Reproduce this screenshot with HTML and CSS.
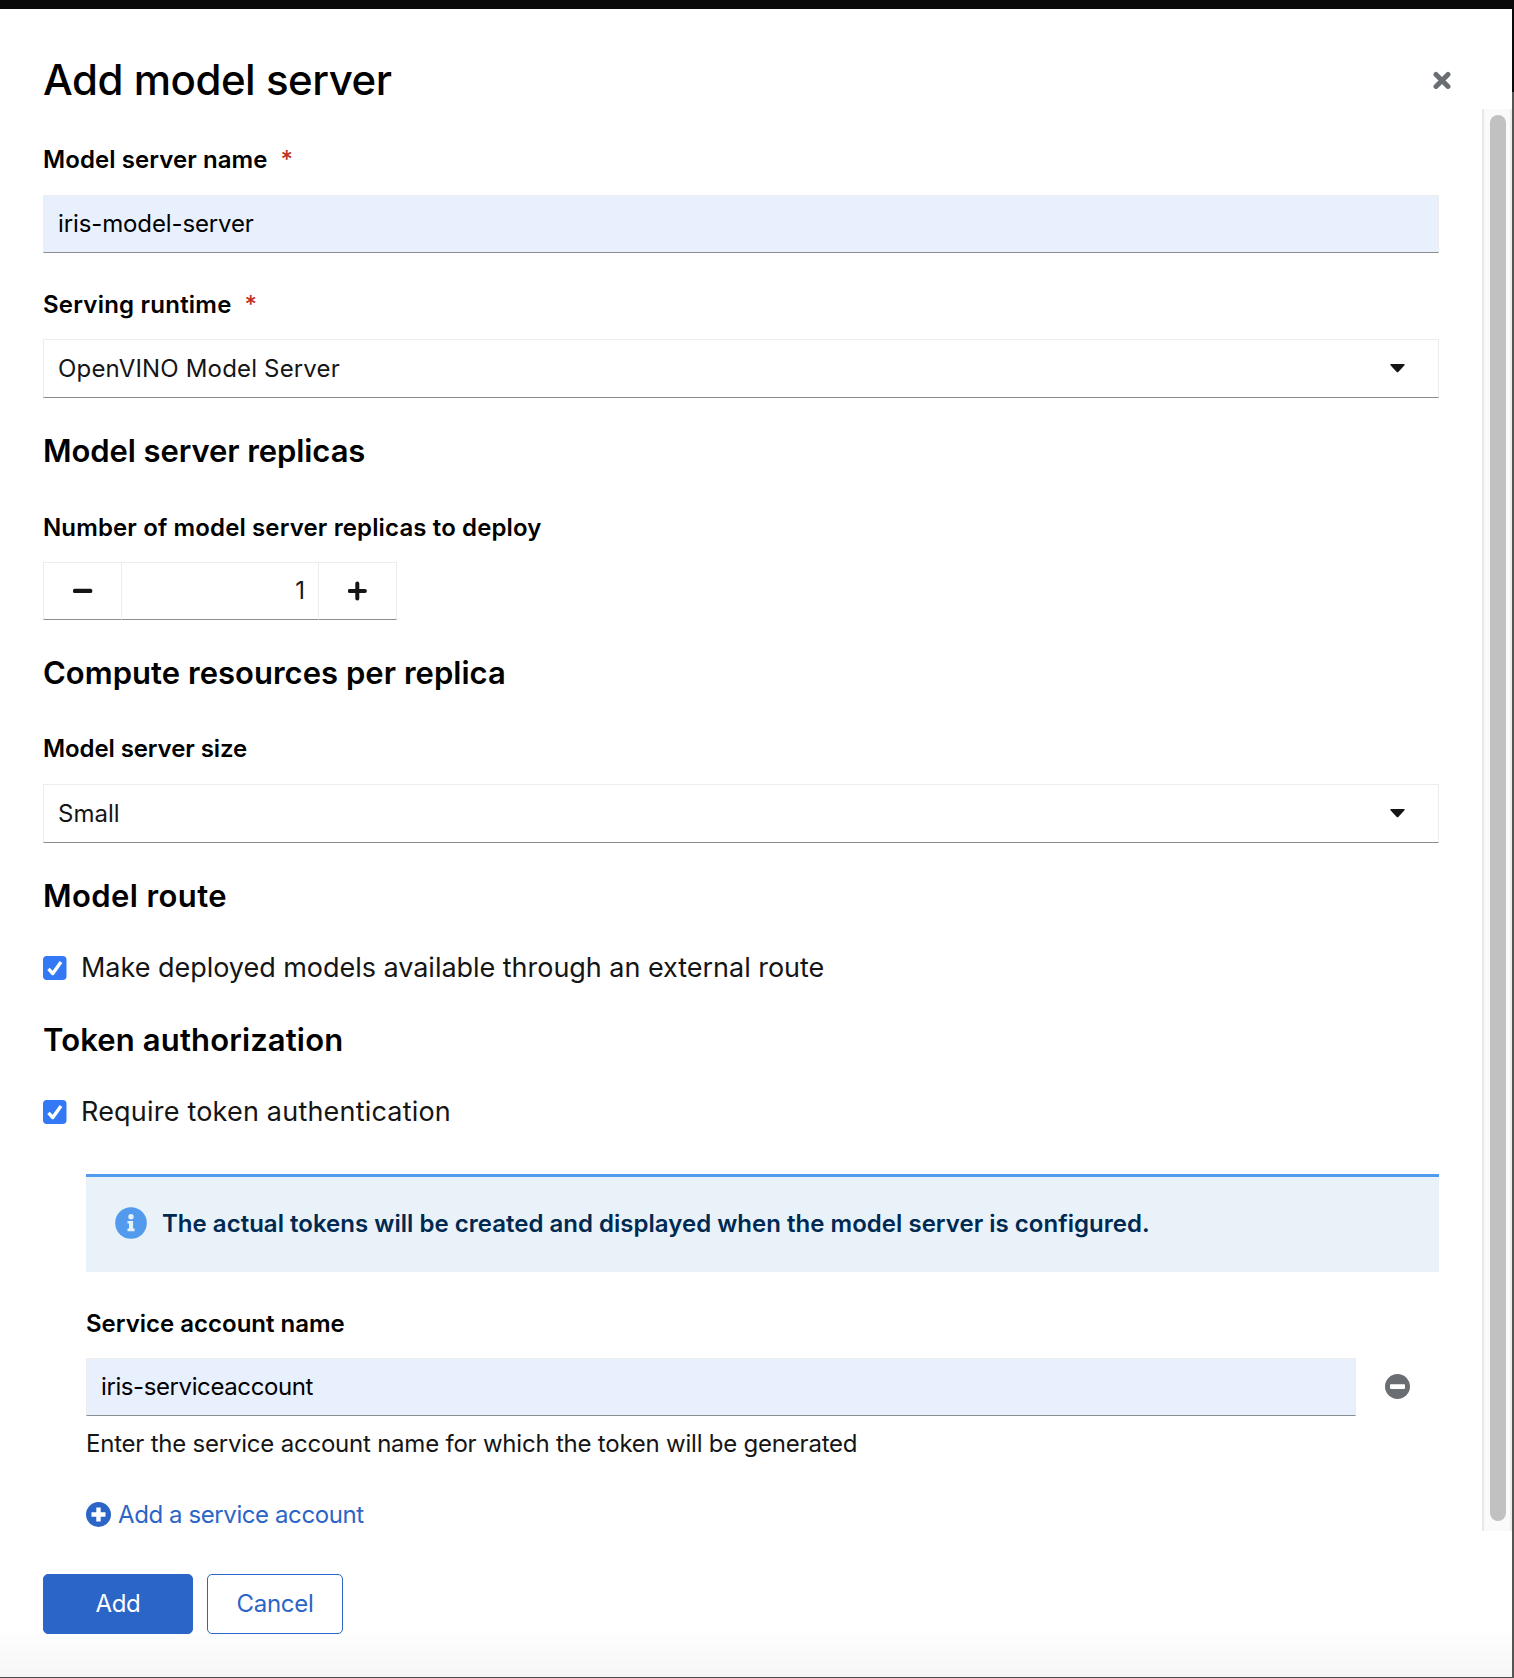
FILE: index.html
```html
<!DOCTYPE html>
<html lang="en">
<head>
<meta charset="utf-8">
<title>Add model server</title>
<link rel="stylesheet" href="styles.css">
</head>
<body>
<div class="page">
  <main class="modal">
    <header class="modal-header">
      <h1 class="title">Add model server</h1>
      <button class="close" aria-label="Close">
        <svg width="18" height="18" viewBox="0 0 18 18"><path d="M3 3.4 L15 15.4 M15 3.4 L3 15.4" stroke="#6a6e73" stroke-width="5" stroke-linecap="round"/></svg>
      </button>
    </header>

    <div class="modal-scroll">
      <form class="modal-body">
        <label class="label name-label">Model server name<span class="required">*</span></label>
        <div class="field filled"><span class="t-server">iris-model-server</span></div>

        <label class="label runtime-label">Serving runtime<span class="required">*</span></label>
        <div class="field select"><span class="t-runtime">OpenVINO Model Server</span>
          <svg class="caret" width="15" height="9" viewBox="0 0 15 9"><path d="M1 0H14Q15.2 .4 14.3 1.5L8.5 7.8Q7.5 8.8 6.5 7.8L.7 1.5Q-.2 .4 1 0Z" fill="#151515"/></svg>
        </div>

        <h2 class="section t-replicas">Model server replicas</h2>
        <label class="label section-label t-number">Number of model server replicas to deploy</label>
        <div class="stepper">
          <span class="step"><svg width="20" height="20" viewBox="0 0 20 20"><rect x="0" y="7.7" width="19.2" height="4.3" rx="1.5" fill="#151515"/></svg></span>
          <span class="step-value">1</span>
          <span class="step"><svg width="20" height="20" viewBox="0 0 20 20"><path d="M1.7 10H16.9M9.3 2.4V17.6" stroke="#151515" stroke-width="4" stroke-linecap="round"/></svg></span>
        </div>

        <h2 class="section t-compute">Compute resources per replica</h2>
        <label class="label size-label">Model server size</label>
        <div class="field select"><span class="t-small">Small</span>
          <svg class="caret" width="15" height="9" viewBox="0 0 15 9"><path d="M1 0H14Q15.2 .4 14.3 1.5L8.5 7.8Q7.5 8.8 6.5 7.8L.7 1.5Q-.2 .4 1 0Z" fill="#151515"/></svg>
        </div>

        <h2 class="section t-route">Model route</h2>
        <div class="check">
          <svg class="box" width="24" height="24" viewBox="0 0 24 24"><rect width="23.5" height="24" rx="4" fill="#3478f6"/><path d="M5.5 12.8 L9.8 17.5 L18 6" fill="none" stroke="#fff" stroke-width="3.4" stroke-linejoin="round"/></svg>
          <span class="t-make">Make deployed models available through an external route</span>
        </div>

        <h2 class="section t-token">Token authorization</h2>
        <div class="check">
          <svg class="box" width="24" height="24" viewBox="0 0 24 24"><rect width="23.5" height="24" rx="4" fill="#3478f6"/><path d="M5.5 12.8 L9.8 17.5 L18 6" fill="none" stroke="#fff" stroke-width="3.4" stroke-linejoin="round"/></svg>
          <span class="t-require">Require token authentication</span>
        </div>

        <div class="nested">
          <div class="alert">
            <svg width="32" height="32" viewBox="0 0 32 32"><circle cx="16" cy="16" r="15.8" fill="#519aed"/><circle cx="16" cy="9.8" r="2.7" fill="#e7f1fa"/><path d="M12.5 14H18.1V21.6H19.6V24.2H12.5V21.6H14V16.6H12.5Z" fill="#e7f1fa"/></svg>
            <strong class="t-alert">The actual tokens will be created and displayed when the model server is configured.</strong>
          </div>
          <label class="label account-label">Service account name</label>
          <div class="account-row">
            <div class="field filled account-field"><span class="t-account">iris-serviceaccount</span></div>
            <svg class="remove" width="25" height="25" viewBox="0 0 25 25"><circle cx="12.5" cy="12.5" r="12.5" fill="#6a6e73"/><rect x="5" y="10.3" width="15" height="4.6" rx=".8" fill="#fff"/></svg>
          </div>
          <p class="helper">Enter the service account name for which the token will be generated</p>
          <a class="add-link">
            <svg width="25" height="25" viewBox="0 0 25 25"><circle cx="12.5" cy="12.5" r="12.5" fill="#2b65c7"/><path d="M5.5 12.5H19.5M12.5 5.5V19.5" stroke="#fff" stroke-width="4.4"/></svg>
            <span>Add a service account</span>
          </a>
        </div>
      </form>
      <div class="track"><div class="thumb"></div></div>
    </div>

    <footer class="modal-footer">
      <button class="btn primary">Add</button>
      <button class="btn secondary">Cancel</button>
    </footer>
  </main>
  <div class="backdrop"></div>
</div>
</body>
</html>
```
FILE: styles.css
```css
* { box-sizing: border-box; }

body {
  margin: 0;
  background: #fff;
  color: #151515;
  font: 400 24px/36px Inter, "Liberation Sans", sans-serif;
}

h1, h2, p { margin: 0; }
svg { display: block; flex: none; }
button { font: inherit; cursor: pointer; }

.page {
  display: grid;
  grid-template-columns: 1fr 2px;
  height: 1678px;
  border-top: 9px solid #0a0a0a;
}

.backdrop { background: linear-gradient(#0a0a0a 83px, #555552 83px); }

.modal {
  display: grid;
  grid-template-rows: 100px 1422px 1fr;
  min-width: 0;
  border-bottom: 1px solid #4d4d4d;
  background: #fff linear-gradient(#fff, #f6f6f6) no-repeat bottom / 100% 50px;
}

.modal-header {
  display: flex;
  justify-content: space-between;
  align-items: flex-start;
  padding: 43px 61px 0 43px;
}

.title {
  font-size: 42px;
  font-weight: 500;
  line-height: 56px;
  letter-spacing: -0.47px;
  color: #000;
}

.close {
  margin-top: 19px;
  padding: 0;
  border: 0;
  background: none;
}

.modal-scroll {
  display: grid;
  grid-template-columns: 1fr 30px;
  grid-template-rows: 1422px;
}

.modal-body {
  min-width: 0;
  padding: 33px 43px 0;
}

.track {
  padding: 6px 4px 10px 6px;
  border-left: 2px solid #e8e8e8;
  border-right: 2px solid #ededed;
  background: #fafafa;
}

.thumb {
  width: 16px;
  height: 100%;
  border-radius: 8px;
  background: #c1c1c1;
}

.label {
  display: block;
  height: 36px;
  font-weight: 600;
  color: #000;
}

.name-label { margin: 0 0 17px; letter-spacing: 0.08px; }
.runtime-label { margin: 34px 0 16px; letter-spacing: 0.22px; }
.section-label { margin: 39px 0 16px; }
.size-label { margin: 38px 0 17px; letter-spacing: -0.1px; }
.account-label { margin: 34px 0 16px; letter-spacing: 0; }

.required {
  margin-left: 13px;
  font-size: 24px;
  font-weight: 500;
  line-height: 1;
  letter-spacing: 0;
  color: #c0311f;
}

.field {
  display: flex;
  align-items: center;
  justify-content: space-between;
  height: 59px;
  padding: 0 33px 0 14px;
  border: 1px solid #ededed;
  border-bottom-color: #8a8d90;
}

.filled {
  height: 58px;
  background: #e8effd;
  color: #000;
}

.section {
  margin-top: 33px;
  font-size: 31px;
  font-weight: 600;
  line-height: 40px;
  color: #000;
}

.stepper {
  display: grid;
  grid-template-columns: 79px 196px 79px;
  width: 354px;
  height: 58px;
}

.step, .step-value {
  display: flex;
  align-items: center;
  justify-content: center;
  border: 1px solid #ededed;
  border-bottom-color: #8a8d90;
}

.step-value {
  justify-content: flex-end;
  padding-right: 13px;
  border-width: 1px 0;
}

.check {
  display: flex;
  align-items: center;
  gap: 14px;
  margin: 32px 0 -1px;
  font-size: 27px;
  line-height: 40px;
}

.box { margin-bottom: 1px; }

.nested { padding: 43px 0 0 43px; }

.alert {
  display: flex;
  align-items: flex-start;
  gap: 15px;
  height: 98px;
  padding: 30px 29px 0;
  border-top: 3px solid #519aed;
  background: #e9f1f9;
  color: #002952;
}

.alert strong { font-weight: 600; margin-top: -1px; white-space: nowrap; }

.account-row {
  display: flex;
  align-items: center;
  gap: 29px;
}

.account-field { width: 1270px; }
.remove { margin-bottom: 1px; }

.helper {
  margin-top: 10px;
  letter-spacing: -0.22px;
}

.add-link {
  display: flex;
  align-items: center;
  gap: 7px;
  margin-top: 34px;
  color: #2b65c7;
  letter-spacing: -0.41px;
}

.add-link svg { margin-bottom: 1px; }
.add-link span { padding-top: 1px; }

.modal-footer {
  display: flex;
  gap: 14px;
  padding: 43px 43px 0;
}

.btn {
  height: 60px;
  padding: 0;
  border: 1px solid #2b65c7;
  border-radius: 5px;
  letter-spacing: -0.3px;
}

.primary { width: 150px; background: #2b65c7; color: #fff; }
.secondary { width: 136px; background: #fff; color: #2b65c7; }

/* Tracking for individual strings */
.t-server { letter-spacing: -0.12px; }
.t-runtime { letter-spacing: 0.17px; }
.t-replicas { letter-spacing: -0.08px; }
.t-number { letter-spacing: 0.13px; }
.t-compute { letter-spacing: 0.03px; }
.t-small { letter-spacing: 0; }
.t-route { letter-spacing: 0.4px; }
.t-make { letter-spacing: -0.03px; }
.t-token { letter-spacing: 0.14px; }
.t-require { letter-spacing: 0.2px; }
.t-alert { letter-spacing: 0.02px; }
.t-account { letter-spacing: -0.4px; }
```
